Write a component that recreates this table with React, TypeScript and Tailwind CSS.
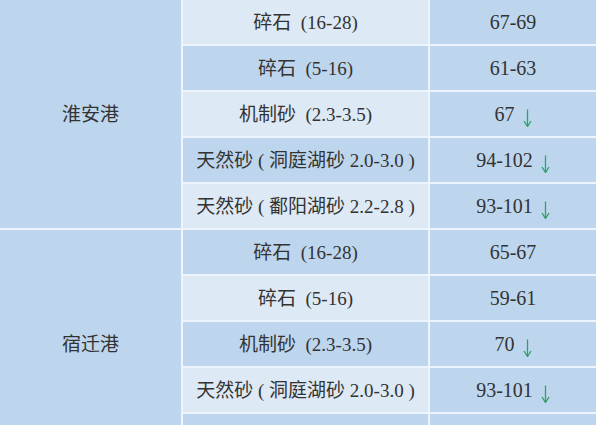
import React from "react";

const Arrow = () => (
  <svg width="9" height="18" viewBox="0 0 9 18" className="inline-block ml-[8px] relative top-[4px]">
    <line x1="4.5" y1="0.5" x2="4.5" y2="17" stroke="#2ea06a" strokeWidth="1.3" />
    <path d="M1 12 L4.5 17.5 L8 12" fill="none" stroke="#2ea06a" strokeWidth="1.3" />
  </svg>
);

type Row = { name: React.ReactNode; price: string; down?: boolean };

const LIGHT = "bg-[#dde9f5]";
const DARK = "bg-[#bed6ed]";

const groups: { port: string; startLight: boolean; rows: Row[] }[] = [
  {
    port: "淮安港",
    startLight: true,
    rows: [
      { name: <>碎石&nbsp;&nbsp;(16-28)</>, price: "67-69" },
      { name: <>碎石&nbsp;&nbsp;(5-16)</>, price: "61-63" },
      { name: <>机制砂&nbsp;&nbsp;(2.3-3.5)</>, price: "67", down: true },
      { name: <>天然砂&nbsp;(&nbsp;洞庭湖砂 2.0-3.0&nbsp;)</>, price: "94-102", down: true },
      { name: <>天然砂&nbsp;(&nbsp;鄱阳湖砂 2.2-2.8&nbsp;)</>, price: "93-101", down: true },
    ],
  },
  {
    port: "宿迁港",
    startLight: false,
    rows: [
      { name: <>碎石&nbsp;&nbsp;(16-28)</>, price: "65-67" },
      { name: <>碎石&nbsp;&nbsp;(5-16)</>, price: "59-61" },
      { name: <>机制砂&nbsp;&nbsp;(2.3-3.5)</>, price: "70", down: true },
      { name: <>天然砂&nbsp;(&nbsp;洞庭湖砂 2.0-3.0&nbsp;)</>, price: "93-101", down: true },
      { name: <>天然砂&nbsp;(&nbsp;鄱阳湖砂 2.2-2.8&nbsp;)</>, price: "93-101", down: true },
    ],
  },
];

export default function App() {
  return (
    <div
      className="w-[600px] h-[425px] overflow-hidden bg-white text-[#333] text-[19px] leading-none"
      style={{ fontFamily: '"Liberation Serif", "Noto Sans CJK SC", serif' }}
    >
      <div className="w-[596px] flex flex-col gap-[2px] bg-[#eef4fb]">
        {groups.map((g, gi) => (
          <div key={gi} className="flex gap-[2px]">
            <div className="w-[181px] shrink-0 flex items-center justify-center bg-[#bdd6ed]">
              <span>{g.port}</span>
            </div>
            <div className="flex flex-col gap-[2px] w-[245px] shrink-0">
              {g.rows.map((r, ri) => {
                const light = (ri % 2 === 0) === g.startLight;
                return (
                  <div
                    key={ri}
                    className={`h-[44px] flex items-center justify-center whitespace-nowrap ${light ? LIGHT : DARK}`}
                  >
                    {r.name}
                  </div>
                );
              })}
            </div>
            <div className="flex flex-col gap-[2px] flex-1">
              {g.rows.map((r, ri) => (
                <div key={ri} className={`h-[44px] flex items-center justify-center whitespace-nowrap ${DARK}`}>
                  <span className="text-[20px]">{r.price}</span>
                  {r.down && <Arrow />}
                </div>
              ))}
            </div>
          </div>
        ))}
        <div className="flex gap-[2px]">
          <div className="w-[181px] shrink-0 h-[44px] bg-[#bdd6ed]" />
          <div className="w-[245px] shrink-0 h-[44px] bg-[#bed6ed]" />
          <div className="flex-1 h-[44px] bg-[#bed6ed]" />
        </div>
      </div>
    </div>
  );
}
